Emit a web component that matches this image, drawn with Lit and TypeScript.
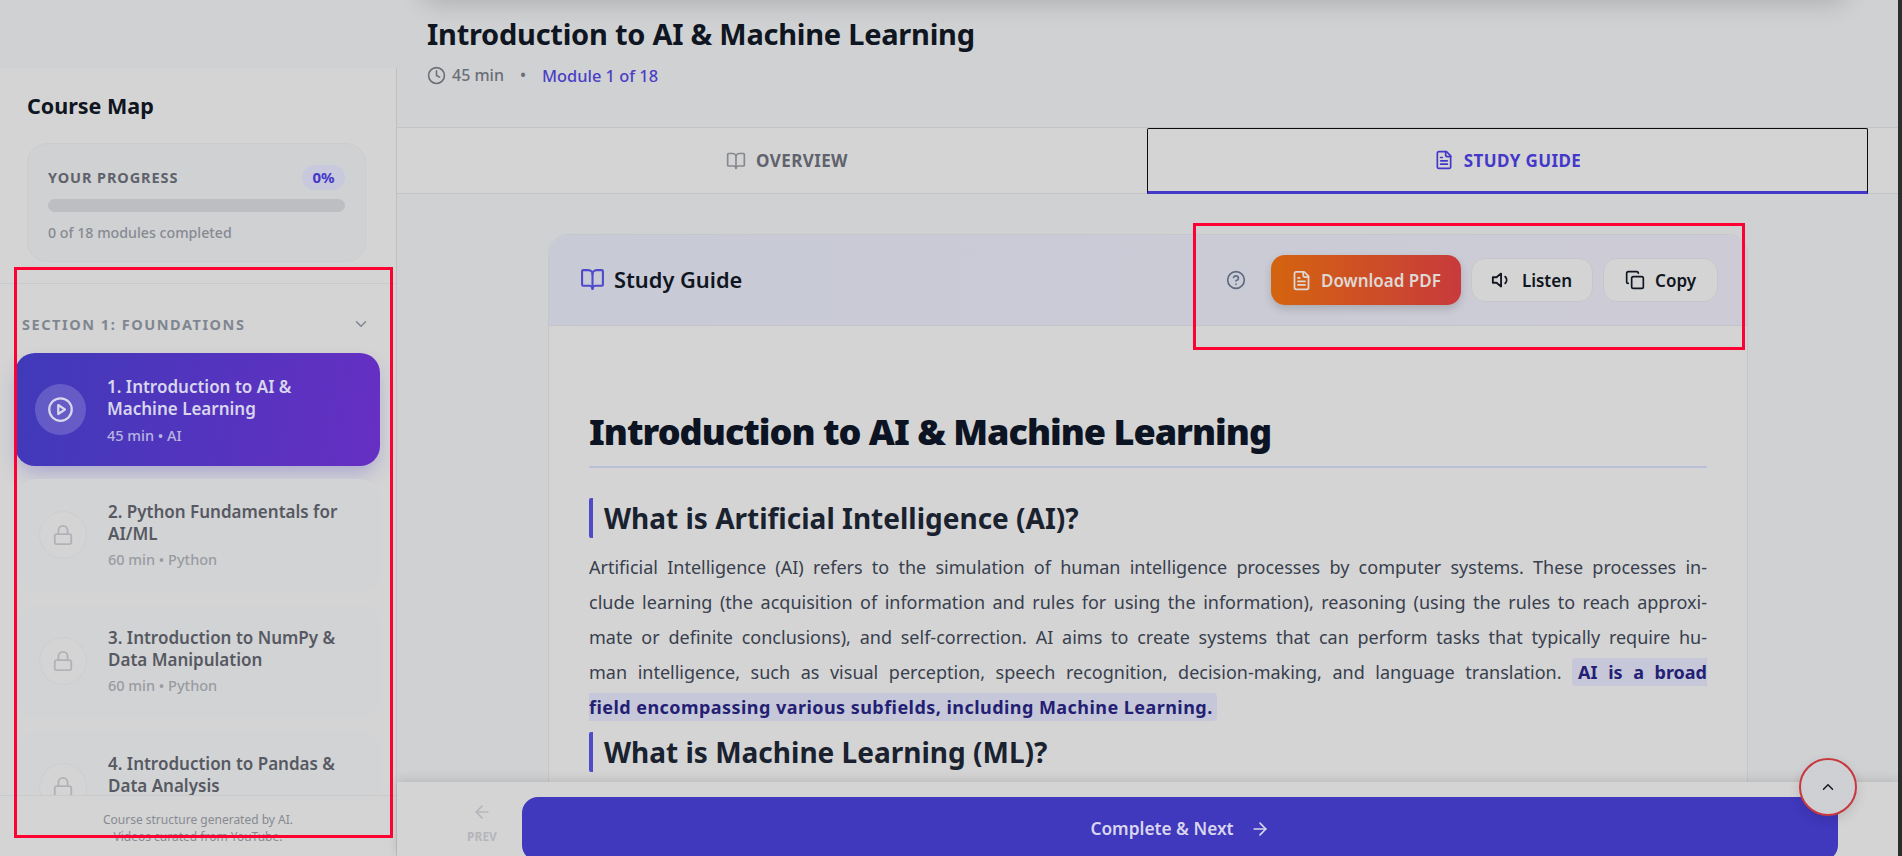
import { LitElement, css, html, svg } from 'lit';
import { customElement } from 'lit/decorators.js';

const ICONS = {
  book: svg`<path d="M12 7v14"/><path d="M3 18a1 1 0 0 1-1-1V4a1 1 0 0 1 1-1h5a4 4 0 0 1 4 4 4 4 0 0 1 4-4h5a1 1 0 0 1 1 1v13a1 1 0 0 1-1 1h-6a3 3 0 0 0-3 3 3 3 0 0 0-3-3z"/>`,
  file: svg`<path d="M15 2H6a2 2 0 0 0-2 2v16a2 2 0 0 0 2 2h12a2 2 0 0 0 2-2V7Z"/><path d="M14 2v4a2 2 0 0 0 2 2h4"/><path d="M10 9H8"/><path d="M16 13H8"/><path d="M16 17H8"/>`,
  clock: svg`<circle cx="12" cy="12" r="10"/><polyline points="12 6 12 12 16 14"/>`,
  play: svg`<circle cx="12" cy="12" r="10"/><polygon points="10 8 16 12 10 16 10 8"/>`,
  lock: svg`<rect x="3" y="11" width="18" height="11" rx="2"/><path d="M7 11V7a5 5 0 0 1 10 0v4"/>`,
  down: svg`<path d="m6 9 6 6 6-6"/>`,
  up: svg`<path d="m18 15-6-6-6 6"/>`,
  left: svg`<path d="m12 19-7-7 7-7"/><path d="M19 12H5"/>`,
  right: svg`<path d="M5 12h14"/><path d="m12 5 7 7-7 7"/>`,
  help: svg`<circle cx="12" cy="12" r="10"/><path d="M9.09 9a3 3 0 0 1 5.83 1c0 2-3 3-3 3"/><path d="M12 17h.01"/>`,
  volume: svg`<polygon points="11 5 6 9 2 9 2 15 6 15 11 19 11 5"/><path d="M15.54 8.46a5 5 0 0 1 0 7.07"/>`,
  copy: svg`<rect x="8" y="8" width="14" height="14" rx="2"/><path d="M4 16c-1.1 0-2-.9-2-2V4c0-1.1.9-2 2-2h10c1.1 0 2 .9 2 2"/>`,
};

const icon = (name: keyof typeof ICONS, size: number) => html`<svg
  class="icon"
  width=${size}
  height=${size}
  viewBox="0 0 24 24"
  fill="none"
  stroke="currentColor"
  stroke-width="2"
  stroke-linecap="round"
  stroke-linejoin="round"
>${ICONS[name]}</svg>`;

const MODULES = [
  { title: '2. Python Fundamentals for AI/ML', meta: '60 min • Python' },
  { title: '3. Introduction to NumPy & Data Manipulation', meta: '60 min • Python' },
  { title: '4. Introduction to Pandas & Data Analysis', meta: '60 min • Python' },
];

@customElement('app-root')
export class AppRoot extends LitElement {
  render() {
    return html`
      <div class="page">
        <aside class="sidebar">
          <div class="side-top">
            <h2 class="map-title">Course Map</h2>
            <div class="progress">
              <div class="progress-head">
                <span class="progress-label">YOUR PROGRESS</span>
                <span class="badge">0%</span>
              </div>
              <div class="track"></div>
              <div class="progress-note">0 of 18 modules completed</div>
            </div>
          </div>
          <div class="side-list">
            <div class="section-head">
              <span>SECTION 1: FOUNDATIONS</span>
              ${icon('down', 18)}
            </div>
            <div class="module active">
              <div class="module-icon">${icon('play', 27)}</div>
              <div class="module-text">
                <div class="module-title">1. Introduction to AI &amp; Machine Learning</div>
                <div class="module-meta">45 min • AI</div>
              </div>
            </div>
            ${MODULES.map(
              (m) => html`
                <div class="module">
                  <div class="module-icon">${icon('lock', 22)}</div>
                  <div class="module-text">
                    <div class="module-title">${m.title}</div>
                    <div class="module-meta">${m.meta}</div>
                  </div>
                </div>
              `
            )}
          </div>
          <div class="side-foot">Course structure generated by AI.<br />Videos curated from YouTube.</div>
        </aside>

        <main class="main">
          <div class="top-shadow"></div>
          <header class="head">
            <h1 class="head-title">Introduction to AI &amp; Machine Learning</h1>
            <div class="head-meta">
              ${icon('clock', 19)}
              <span class="duration">45 min</span>
              <span class="dot">•</span>
              <span class="count">Module 1 of 18</span>
            </div>
          </header>

          <nav class="tabs">
            <div class="tab first">${icon('book', 20)}OVERVIEW</div>
            <div class="tab current">${icon('file', 20)}STUDY GUIDE</div>
          </nav>

          <section class="scroll">
            <article class="card">
              <div class="card-head">
                <div class="card-title">${icon('book', 25)}Study Guide</div>
                <div class="actions">
                  <span class="help">${icon('help', 20)}</span>
                  <button class="btn pdf">${icon('file', 21)}Download PDF</button>
                  <button class="btn listen">${icon('volume', 22)}Listen</button>
                  <button class="btn copy">${icon('copy', 20)}Copy</button>
                </div>
              </div>
              <div class="doc">
                <h1>Introduction to AI &amp; Machine Learning</h1>
                <h2>What is Artificial Intelligence (AI)?</h2>
                <p>
                  <span class="line">Artificial Intelligence (AI) refers to the simulation of human intelligence processes by computer systems. These processes in-</span>
                  <span class="line">clude learning (the acquisition of information and rules for using the information), reasoning (using the rules to reach approxi-</span>
                  <span class="line">mate or definite conclusions), and self-correction. AI aims to create systems that can perform tasks that typically require hu-</span>
                  <span class="line">man intelligence, such as visual perception, speech recognition, decision-making, and language translation. <mark class="start">AI is a broad</mark></span>
                  <span class="line last"><mark class="end">field encompassing various subfields, including Machine Learning.</mark></span>
                </p>
                <h2>What is Machine Learning (ML)?</h2>
              </div>
            </article>
          </section>

          <footer class="bar">
            <div class="prev">${icon('left', 20)}<span>PREV</span></div>
            <button class="next">Complete &amp; Next ${icon('right', 20)}</button>
          </footer>
        </main>

        <div class="edge"></div>

        <button class="to-top">${icon('up', 18)}</button>
        <div class="callout list"></div>
        <div class="callout tools"></div>
      </div>
    `;
  }

  static styles = css`
    :host {
      display: block;
      height: 856px;
      overflow: hidden;
      font-family: 'Noto Sans', 'Liberation Sans', sans-serif;
      color: #0f1521;
    }

    .page {
      position: relative;
      display: flex;
      height: 856px;
      overflow: hidden;
      background: #d0d1d3;
    }

    .icon {
      display: block;
      flex: none;
    }

    /* sidebar */
    .sidebar {
      flex: none;
      display: flex;
      flex-direction: column;
      width: 396px;
      margin-top: 68px;
      background: #d4d4d4;
      border-right: 1px solid #bfc0c3;
    }

    .side-top {
      padding: 22px 30px 21px 27px;
      border-bottom: 1px solid #c8c9cb;
    }

    .map-title {
      margin: 0 0 21px;
      font-size: 21.5px;
      line-height: 32px;
      font-weight: 700;
    }

    .progress {
      height: 119px;
      box-sizing: border-box;
      padding: 20px 20px 0;
      background: #d0d1d3;
      border: 1px solid #cbccce;
      border-radius: 20px;
    }

    .progress-head {
      display: flex;
      justify-content: space-between;
      align-items: center;
      height: 26px;
    }

    .progress-label {
      font-size: 14.5px;
      font-weight: 700;
      letter-spacing: 0.9px;
      color: #5f626b;
    }

    .badge {
      width: 43px;
      height: 25px;
      border-radius: 13px;
      background: #c8c9dc;
      color: #4338ca;
      font-size: 15px;
      font-weight: 700;
      line-height: 25px;
      text-align: center;
    }

    .track {
      height: 13px;
      margin-top: 9px;
      border-radius: 7px;
      background: #bdbec1;
    }

    .progress-note {
      margin-top: 11px;
      font-size: 14.2px;
      line-height: 20px;
      color: #878a92;
      font-weight: 500;
    }

    .side-list {
      flex: 1;
      min-height: 0;
      overflow: hidden;
      padding: 27px 16px 0;
    }

    .section-head {
      display: flex;
      justify-content: space-between;
      align-items: center;
      height: 26px;
      padding: 0 10px 0 6px;
      margin-bottom: 16px;
      font-size: 14.5px;
      font-weight: 700;
      letter-spacing: 1.55px;
      color: #7f8690;
    }

    .module {
      display: flex;
      align-items: center;
      gap: 21px;
      box-sizing: border-box;
      height: 113px;
      margin-bottom: 13px;
      padding: 0 34px 2px 23px;
      border-radius: 20px;
      background: #d2d3d5;
    }

    .module-icon {
      flex: none;
      display: grid;
      place-items: center;
      width: 48px;
      height: 48px;
      border-radius: 50%;
      background: #d4d4d4;
      border: 1px solid #cdced0;
      box-sizing: border-box;
      color: #b0b2b7;
    }

    .module-title {
      font-size: 17px;
      line-height: 22px;
      font-weight: 600;
      color: #575962;
    }

    .module-meta {
      margin-top: 4px;
      font-size: 14.5px;
      line-height: 20px;
      font-weight: 500;
      color: #999ba1;
    }

    .module.active {
      gap: 21px;
      margin-left: -1px;
      padding: 0 34px 0 20px;
      background: linear-gradient(100deg, #3f3ab9 0%, #662fc3 100%);
      box-shadow: 0 10px 20px -4px rgba(67, 56, 202, 0.3);
    }

    .active .module-icon {
      width: 51px;
      height: 51px;
      background: rgba(255, 255, 255, 0.18);
      border: 0;
      color: #d8d6ec;
    }

    .active .module-text {
      padding-top: 2px;
    }

    .active .module-title {
      color: #d8d6ec;
    }

    .active .module-meta {
      margin-top: 5px;
      color: #b8b5e0;
    }

    .side-foot {
      flex: none;
      height: 61px;
      box-sizing: border-box;
      padding-top: 15px;
      border-top: 1px solid #c8c9cb;
      background: #d4d4d4;
      text-align: center;
      font-size: 12px;
      line-height: 17px;
      color: #878a92;
    }

    /* main column */
    .main {
      position: relative;
      flex: 1;
      min-width: 0;
      display: flex;
      flex-direction: column;
    }

    .top-shadow {
      position: absolute;
      left: 24px;
      right: 50px;
      top: -40px;
      height: 40px;
      border-radius: 16px;
      box-shadow: 0 4px 24px rgba(0, 0, 0, 0.16);
    }

    .head {
      flex: none;
      height: 128px;
      box-sizing: border-box;
      padding: 14px 30px 0;
      border-bottom: 1px solid #c3c4c7;
    }

    .head-title {
      margin: 0;
      font-size: 29px;
      line-height: 40px;
      font-weight: 700;
      letter-spacing: -0.25px;
    }

    .head-meta {
      display: flex;
      align-items: center;
      margin-top: 11px;
      height: 20px;
      font-size: 16px;
      font-weight: 500;
      color: #6b6e76;
    }

    .duration {
      margin-left: 6px;
    }

    .dot {
      margin: 0 16px;
    }

    .count {
      font-size: 16.4px;
      color: #4a3fc4;
    }

    .tabs {
      flex: none;
      display: flex;
      height: 66px;
      padding-right: 30px;
      background: #d4d4d4;
      border-bottom: 1px solid #c3c4c7;
      box-sizing: border-box;
    }

    .tab {
      display: flex;
      align-items: center;
      justify-content: center;
      gap: 10px;
      box-sizing: border-box;
      font-size: 17px;
      font-weight: 700;
      letter-spacing: 0.4px;
      color: #5f636d;
    }

    .tab .icon {
      color: #85888f;
    }

    .tab.first {
      width: 750px;
      padding-left: 30px;
    }

    .tab.current {
      flex: 1;
      margin-bottom: -1px;
      border: 1.5px solid #0c0c0c;
      border-bottom: 3px solid #4338ca;
      border-radius: 2px 2px 0 0;
      color: #4338ca;
    }

    .tab.current .icon {
      color: #4338ca;
    }

    .scroll {
      flex: 1;
      min-height: 0;
      overflow: hidden;
      padding: 40px 150px 0 151px;
    }

    .card {
      background: #d4d4d4;
      border: 1px solid #c6c7ca;
      border-radius: 20px 20px 0 0;
      min-height: 700px;
    }

    .card-head {
      display: flex;
      justify-content: space-between;
      align-items: center;
      height: 91px;
      box-sizing: border-box;
      padding: 0 29px 0 31px;
      background: linear-gradient(90deg, #c8cad6, #cdccd6);
      border-bottom: 1px solid #c3c4c7;
      border-radius: 20px 20px 0 0;
    }

    .card-title {
      display: flex;
      align-items: center;
      gap: 9px;
      padding-bottom: 2px;
      font-size: 21.8px;
      font-weight: 600;
    }

    .card-title .icon {
      color: #4f4ac9;
    }

    .actions {
      display: flex;
      align-items: center;
      gap: 10px;
    }

    .help {
      margin-right: 15px;
      color: #5f6b80;
    }

    .btn {
      display: flex;
      align-items: center;
      gap: 10px;
      height: 44px;
      padding: 0 20px;
      background: #d4d4d4;
      border: 1px solid #c6c7ca;
      border-radius: 14px;
      font: 600 17px 'Noto Sans', 'Liberation Sans', sans-serif;
      color: #0f1521;
    }

    .btn.listen {
      gap: 9px;
      padding: 0 20px 0 19px;
    }

    .btn.copy {
      padding: 0 21px;
    }

    .btn.pdf {
      gap: 9px;
      height: 50px;
      border: 0;
      background: linear-gradient(90deg, #d4640f, #c83a3c);
      box-shadow: 0 4px 8px rgba(0, 0, 0, 0.16);
      color: #ded8d4;
    }

    .doc {
      padding: 81px 40px 0;
    }

    .doc h1 {
      margin: 0;
      padding-bottom: 9px;
      border-bottom: 2px solid #b9c0d8;
      font-size: 36px;
      line-height: 50px;
      font-weight: 900;
      letter-spacing: -1px;
      color: #0c1322;
    }

    .doc h2 {
      margin: 30px 0 0;
      padding-left: 11px;
      border-left: 4px solid #4f4ac9;
      border-radius: 2px;
      font-size: 28px;
      line-height: 40px;
      font-weight: 700;
      color: #1a2230;
    }

    .doc p {
      margin: 12px 0 0;
      font-size: 18px;
      line-height: 35px;
      color: #38404e;
    }

    .line {
      display: block;
      text-align: justify;
      text-align-last: justify;
    }

    .line.last {
      text-align-last: left;
    }

    .doc p + h2 {
      margin-top: 7px;
    }

    mark {
      padding: 2px 6px;
      background: #c6c8d9;
      font-weight: 700;
      color: #241f74;
    }

    mark.start {
      padding-right: 0;
      border-radius: 4px 0 0 4px;
    }

    mark.end {
      padding-left: 0;
      padding-right: 4px;
      border-radius: 0 4px 4px 0;
      letter-spacing: 0.45px;
    }

    /* bottom bar */
    .bar {
      position: relative;
      flex: none;
      display: flex;
      height: 74px;
      box-sizing: border-box;
      padding: 15px 60px 0 45px;
      background: #d4d4d4;
      box-shadow: 0 -2px 10px rgba(0, 0, 0, 0.12);
    }

    .prev {
      display: flex;
      flex-direction: column;
      align-items: center;
      gap: 6px;
      width: 80px;
      padding-top: 5px;
      font-size: 12px;
      font-weight: 700;
      color: #b4b6bb;
    }

    .next {
      flex: 1;
      display: flex;
      align-items: center;
      justify-content: center;
      gap: 16px;
      height: 64px;
      padding-bottom: 2px;
      border: 0;
      border-radius: 16px;
      background: #4038bd;
      font: 600 17.3px 'Noto Sans', 'Liberation Sans', sans-serif;
      color: #d8d6ec;
    }

    .edge {
      flex: none;
      width: 4px;
      background: #2e2e2e;
    }

    /* overlays */
    .to-top {
      position: absolute;
      left: 1799px;
      top: 758px;
      display: grid;
      place-items: center;
      width: 58px;
      height: 58px;
      padding: 0;
      border: 2px solid #c8383f;
      border-radius: 50%;
      background: #cfd0d3;
      box-shadow: 0 4px 12px rgba(0, 0, 0, 0.12);
      color: #161a24;
    }

    .callout {
      position: absolute;
      box-sizing: border-box;
      border: 3px solid #ff0033;
      pointer-events: none;
    }

    .callout.list {
      left: 14px;
      top: 267px;
      width: 379px;
      height: 571px;
    }

    .callout.tools {
      left: 1193px;
      top: 223px;
      width: 552px;
      height: 127px;
    }
  `;
}
